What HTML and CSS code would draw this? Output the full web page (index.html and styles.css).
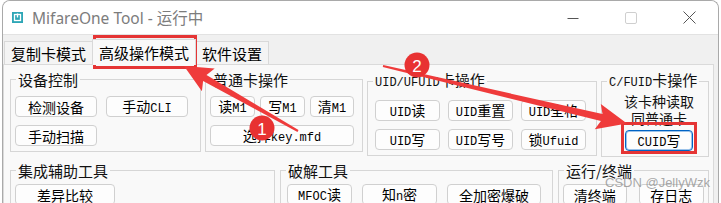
FILE: index.html
```html
<!DOCTYPE html>
<html lang="zh-CN">
<head>
<meta charset="utf-8">
<title>MifareOne Tool</title>
<link rel="stylesheet" href="styles.css">
</head>
<body>
<div class="window">
  <div class="titlebar">
    <svg class="appicon" width="11" height="11" viewBox="0 0 11 11">
      <rect x="0" y="0" width="11" height="11" fill="#2ea6b6"/>
      <rect x="2.5" y="2.5" width="6" height="6" fill="none" stroke="#fff" stroke-width="1.3"/>
      <rect x="4.8" y="1.5" width="1.4" height="4" fill="#fff"/>
    </svg>
    <span class="title">MifareOne Tool - 运行中</span>
    <div class="controls">
      <span class="ctl"><svg width="12" height="12" viewBox="0 0 12 12"><line x1="0.5" y1="6.5" x2="11.5" y2="6.5" stroke="#555" stroke-width="1"/></svg></span>
      <span class="ctl"><svg width="12" height="12" viewBox="0 0 12 12"><rect x="0.5" y="0.5" width="11" height="11" rx="1.5" fill="none" stroke="#cfcfcf" stroke-width="1"/></svg></span>
      <span class="ctl"><svg width="13" height="13" viewBox="0 0 13 13"><path d="M0.5 0.5 L12.5 12.5 M12.5 0.5 L0.5 12.5" stroke="#555" stroke-width="1"/></svg></span>
    </div>
  </div>
  <div class="client">
    <div class="tabs">
      <div class="tab">复制卡模式</div>
      <div class="tab active">高级操作模式</div>
      <div class="tab">软件设置</div>
    </div>
    <div class="panel">
      <div class="row row1">
        <fieldset class="grp g1">
          <legend>设备控制</legend>
          <div class="body b1">
            <button class="btn">检测设备</button>
            <button class="btn">手动<span class="en">CLI</span></button>
            <button class="btn">手动扫描</button>
          </div>
        </fieldset>
        <fieldset class="grp g2">
          <legend>普通卡操作</legend>
          <div class="body b2">
            <button class="btn">读<span class="en">M1</span></button>
            <button class="btn">写<span class="en">M1</span></button>
            <button class="btn">清<span class="en">M1</span></button>
            <button class="btn wide">选择<span class="en">key.mfd</span></button>
          </div>
        </fieldset>
        <fieldset class="grp g3">
          <legend><span class="en">UID/UFUID</span>卡操作</legend>
          <div class="body b3">
            <button class="btn"><span class="en">UID</span>读</button>
            <button class="btn"><span class="en">UID</span>重置</button>
            <button class="btn"><span class="en">UID</span>全格</button>
            <button class="btn"><span class="en">UID</span>写</button>
            <button class="btn"><span class="en">UID</span>写号</button>
            <button class="btn">锁<span class="en">Ufuid</span></button>
          </div>
        </fieldset>
        <fieldset class="grp g4">
          <legend><span class="en">C/FUID</span>卡操作</legend>
          <div class="body b4">
            <div class="note">该卡种读取</div>
            <div class="note">同普通卡</div>
            <button class="btn default"><span class="en">CUID</span>写</button>
          </div>
        </fieldset>
      </div>
      <div class="row row2">
        <fieldset class="grp g5">
          <legend>集成辅助工具</legend>
          <div class="body b5">
            <button class="btn">差异比较</button>
          </div>
        </fieldset>
        <fieldset class="grp g6">
          <legend>破解工具</legend>
          <div class="body b6">
            <button class="btn w65"><span class="en">MFOC</span>读</button>
            <button class="btn w75">知<span class="en">n</span>密</button>
            <button class="btn w94">全加密爆破</button>
          </div>
        </fieldset>
        <fieldset class="grp g7">
          <legend>运行/终端</legend>
          <div class="body b7">
            <button class="btn w65">清终端</button>
            <button class="btn w67">存日志</button>
          </div>
        </fieldset>
      </div>
    </div>
  </div>
</div>

<div class="watermark">CSDN @JellyWzk</div>

<svg class="annot" width="721" height="203" viewBox="0 0 721 203">
  <rect x="94.5" y="36.5" width="101" height="31" fill="none" stroke="#e53535" stroke-width="3"/>
  <rect x="622.5" y="123.5" width="73" height="29" fill="none" stroke="#e53535" stroke-width="3"/>
  <polygon fill="#ef3b3b" points="298.5,130.1 206.5,74.9 214.7,68.6 184,66 201.9,91.2 203.1,80.9 297.5,131.9"/>
  <polygon fill="#ef3b3b" points="383.2,65 602.5,114.1 600.8,104 627,123.5 594.8,129.3 600.9,120.9 382.8,67"/>
  <circle cx="262" cy="128" r="12.5" fill="#e83232"/>
  <text x="262" y="129" class="num">1</text>
  <circle cx="417" cy="65" r="12.5" fill="#e83232"/>
  <text x="417" y="66" class="num">2</text>
</svg>
</body>
</html>
```

FILE: styles.css
```css
html, body {
  margin: 0;
  padding: 0;
}
body {
  width: 721px;
  height: 203px;
  overflow: hidden;
  position: relative;
  background: #ffffff;
  font-family: "Noto Sans CJK SC", sans-serif;
  color: #000;
}
.window {
  margin-left: 2px;
  width: 715px;
  height: 230px;
  border: 1px solid #a9a9a9;
  border-bottom: none;
  border-radius: 8px 8px 0 0;
  background: #f0f0f0;
  overflow: hidden;
}
.titlebar {
  height: 33px;
  background: #ffffff;
  border-bottom: 1px solid #e2e2e2;
  display: flex;
  align-items: center;
}
.appicon {
  margin-left: 9px;
  flex: none;
}
.title {
  margin-left: 9px;
  font-family: "Noto Sans", "Noto Sans CJK SC", sans-serif;
  font-size: 15.5px;
  color: #7c7c7c;
  line-height: 20px;
}
.controls {
  margin-left: auto;
  display: flex;
  height: 33px;
}
.ctl {
  width: 58px;
  display: flex;
  align-items: center;
  justify-content: center;
}
.tabs {
  height: 29px;
  display: flex;
  align-items: flex-end;
  padding-left: 1px;
}
.tab {
  height: 22px;
  line-height: 23px;
  padding: 0 6px;
  font-size: 15px;
  background: #f4f4f4;
  border: 1px solid #d9d9d9;
  border-bottom: none;
  margin-right: -1px;
}
.tab.active {
  height: 25px;
  line-height: 25px;
  background: #f9f9f9;
  margin-bottom: -1px;
  position: relative;
  z-index: 1;
}
.client {
  padding-right: 4px;
}
.panel {
  height: 200px;
  background: #f9f9f9;
  border: 1px solid #dadada;
  padding: 6px 0 0 6px;
}
.row {
  display: flex;
  align-items: flex-start;
}
.row1 { gap: 4px; }
.row2 { gap: 5px; margin-top: 5px; }
.grp {
  margin: 0;
  padding: 0;
  min-width: 0;
  border: 1px solid #d6d6d6;
  box-sizing: border-box;
}
.grp legend {
  margin-left: 5px;
  padding: 0 2px;
  font-size: 15px;
  line-height: 17px;
  color: #111;
}
.en {
  font-family: "Liberation Mono", monospace;
  font-size: 12px;
}
.g1 { width: 191px; }
.g2 { width: 158px; }
.g3 { width: 230px; }
.g4 { width: 108px; }
.g5 { width: 265px; height: 60px; }
.g6 { width: 273px; height: 60px; }
.g7 { width: 151px; height: 60px; }
.body {
  padding: 8px 4px 5px 4px;
  display: grid;
  row-gap: 8px;
}
.b1 {
  grid-template-columns: 82px 82px;
  column-gap: 9px;
}
.b2 {
  grid-template-columns: 45px 45px 44px;
  column-gap: 5px;
}
.b2 .wide { grid-column: 1 / 4; }
.b3 {
  padding-left: 7px;
  grid-template-columns: 65px 65px 65px;
  column-gap: 8px;
}
.b4 {
  display: flex;
  flex-direction: column;
  align-items: center;
  row-gap: 0;
  padding-top: 1px;
  padding-left: 8px;
  padding-right: 0;
}
.note {
  font-size: 14px;
  line-height: 17px;
  color: #111;
}
.b4 .btn {
  width: 68px;
  margin-top: 3px;
}
.b5 {
  padding-top: 5px;
  grid-template-columns: 100px;
}
.b6 {
  padding-top: 5px;
  padding-left: 6px;
  display: flex;
  gap: 10px;
}
.b7 {
  padding-top: 5px;
  display: flex;
  gap: 12px;
}
.w65 { width: 65px; }
.w67 { width: 67px; }
.w75 { width: 75px; }
.w94 { width: 94px; }
.btn {
  box-sizing: border-box;
  height: 21px;
  padding: 0;
  margin: 0;
  border: 1px solid #d0d0d0;
  border-radius: 4px;
  background: #fdfdfd;
  font-family: "Noto Sans CJK SC", sans-serif;
  font-size: 14px;
  line-height: 18px;
  color: #000;
  white-space: nowrap;
  overflow: hidden;
}
.btn.default {
  border: 1px solid #0063c4;
  box-shadow: inset 0 0 0 1px #9cc3ea;
}
.watermark {
  position: absolute;
  left: 605px;
  top: 175px;
  font-family: "Liberation Sans", Arial, sans-serif;
  font-size: 13px;
  line-height: 16px;
  color: rgba(140, 140, 140, 0.75);
  white-space: nowrap;
}
.annot {
  position: absolute;
  left: 0;
  top: 0;
  pointer-events: none;
}
.num {
  font-family: "Liberation Sans", Arial, sans-serif;
  font-size: 17px;
  fill: #ffffff;
  text-anchor: middle;
  dominant-baseline: central;
}
```
